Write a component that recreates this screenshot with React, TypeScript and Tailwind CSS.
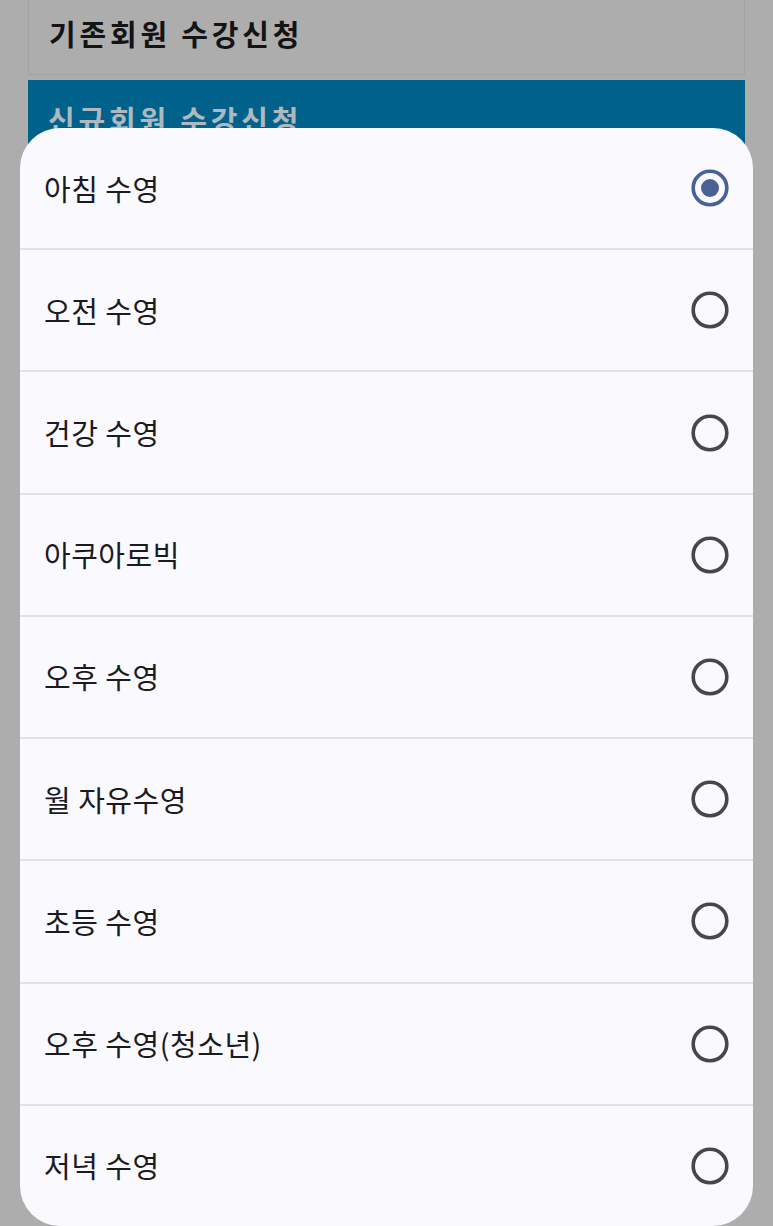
import React from "react";

const items = [
  "아침 수영",
  "오전 수영",
  "건강 수영",
  "아쿠아로빅",
  "오후 수영",
  "월 자유수영",
  "초등 수영",
  "오후 수영(청소년)",
  "저녁 수영",
];

function Radio({ checked }: { checked: boolean }) {
  return checked ? (
    <svg width="40" height="40" viewBox="0 0 40 40">
      <circle cx="20" cy="20" r="16.8" fill="none" stroke="#4a6196" strokeWidth="3.6" />
      <circle cx="20" cy="20" r="9" fill="#4a6196" />
    </svg>
  ) : (
    <svg width="40" height="40" viewBox="0 0 40 40">
      <circle cx="20" cy="20" r="16.8" fill="none" stroke="#47464b" strokeWidth="3.6" />
    </svg>
  );
}

export default function App() {
  return (
    <div
      className="relative w-[773px] h-[1226px] overflow-hidden bg-[#adadad]"
      style={{ fontFamily: '"Noto Sans CJK KR", "Noto Sans", sans-serif' }}
    >
      <div className="flex flex-col px-[28px]">
        <div className="h-[75px] border border-t-0 border-[#a3a3a3] flex items-center pl-[20px] pb-[6px]">
          <span className="text-[29px] font-semibold text-[#141414] tracking-[3.8px]">기존회원 수강신청</span>
        </div>
        <div className="mt-[5px] h-[120px] bg-[#00628a] pl-[20px] pt-[18px]">
          <span className="text-[29px] font-semibold text-[#aeb8bf] tracking-[3.8px]">신규회원 수강신청</span>
        </div>
      </div>
      <div className="absolute left-[20px] top-[128px] w-[733px] h-[1098px] bg-[#f9f9fe] rounded-[40px] flex flex-col overflow-hidden">
        {items.map((t, i) => (
          <div
            key={t}
            className={`flex-1 flex items-center justify-between pl-[24px] pr-[23px] ${
              i < items.length - 1 ? "border-b-2 border-[#e1e1e7]" : ""
            }`}
          >
            <span className="text-[29px] text-[#1b1b1f] leading-none tracking-[0.5px]">{t}</span>
            <Radio checked={i === 0} />
          </div>
        ))}
      </div>
    </div>
  );
}
